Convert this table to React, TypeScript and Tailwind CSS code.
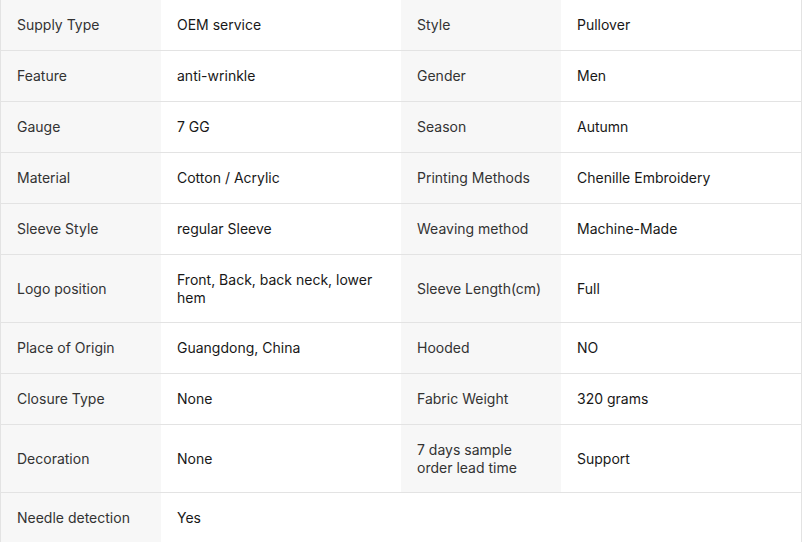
type Row = { cells: [string, string, string?, string?]; tall?: boolean }

const rows: Row[] = [
  { cells: ['Supply Type', 'OEM service', 'Style', 'Pullover'] },
  { cells: ['Feature', 'anti-wrinkle', 'Gender', 'Men'] },
  { cells: ['Gauge', '7 GG', 'Season', 'Autumn'] },
  { cells: ['Material', 'Cotton / Acrylic', 'Printing Methods', 'Chenille Embroidery'] },
  { cells: ['Sleeve Style', 'regular Sleeve', 'Weaving method', 'Machine-Made'] },
  { cells: ['Logo position', 'Front, Back, back neck, lower hem', 'Sleeve Length(cm)', 'Full'], tall: true },
  { cells: ['Place of Origin', 'Guangdong, China', 'Hooded', 'NO'] },
  { cells: ['Closure Type', 'None', 'Fabric Weight', '320 grams'] },
  { cells: ['Decoration', 'None', '7 days sample order lead time', 'Support'], tall: true },
  { cells: ['Needle detection', 'Yes'] },
]

export default function App() {
  return (
    <div className="w-[802px] border-x border-[#e3e3e3] bg-white font-['Inter','Liberation_Sans',sans-serif] text-[14px] leading-[18px]">
      {rows.map(({ cells: [l1, v1, l2, v2], tall }) => (
        <div
          key={l1}
          className={`grid grid-cols-[160px_240px_160px_240px] border-b border-[#e3e3e3] ${tall ? 'h-[68px]' : 'h-[51px]'}`}
        >
          <div className="flex items-center bg-[#f7f7f7] px-4 text-[#333]">{l1}</div>
          <div className="flex items-center px-4 text-[#181818]">{v1}</div>
          <div className={`flex items-center px-4 text-[#333] ${l2 ? 'bg-[#f7f7f7]' : ''}`}>{l2}</div>
          <div className="flex items-center px-4 text-[#181818]">{v2}</div>
        </div>
      ))}
    </div>
  )
}
